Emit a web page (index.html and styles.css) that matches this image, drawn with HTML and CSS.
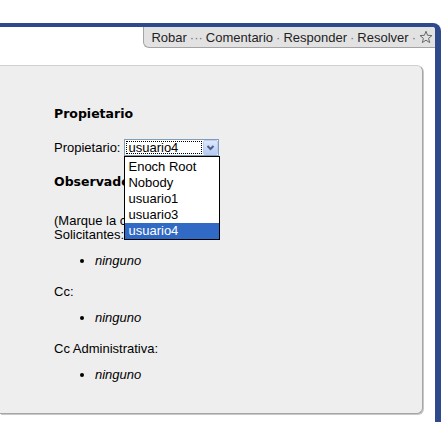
FILE: index.html
```html
<!DOCTYPE html>
<html lang="es">
<head>
    <title>Ticket - Propietario</title>
    <meta charset="utf-8">
    <link rel="stylesheet" href="styles.css">
</head>
<body>
    <div class="window">
        <div class="actions">
            <div class="tab">
                Robar <span class="sep">···</span> Comentario <span class="sep">·</span> Responder <span class="sep">·</span> Resolver <span class="sep">·</span>
                <svg class="star" width="14" height="14" viewBox="0 0 14 14">
                    <polygon points="7,1.2 8.59,5.32 12.99,5.55 9.57,8.33 10.7,12.6 7,10.2 3.3,12.6 4.43,8.33 1.01,5.55 5.41,5.32" fill="none" stroke="#6a6a6a" stroke-width="1" stroke-linejoin="round"/>
                </svg>
            </div>
        </div>
        <div class="box">
            <h3>Propietario</h3>
            <div class="row">
                <label for="owner">Propietario:</label>
                <div class="combo" id="owner">
                    <div class="combo-value">usuario4</div>
                    <div class="combo-btn">
                        <svg width="13" height="13" viewBox="0 0 13 13">
                            <polyline points="3.5,5 6.5,8 9.5,5" fill="none" stroke="#4d6185" stroke-width="2"/>
                        </svg>
                    </div>
                    <ul class="combo-list">
                        <li>Enoch Root</li>
                        <li>Nobody</li>
                        <li>usuario1</li>
                        <li>usuario3</li>
                        <li class="selected">usuario4</li>
                    </ul>
                </div>
            </div>
            <h3 class="next">Observadores</h3>
            <p class="hint">(Marque la casilla)<br>Solicitantes:</p>
            <ul class="people">
                <li>ninguno</li>
            </ul>
            <p>Cc:</p>
            <ul class="people">
                <li>ninguno</li>
            </ul>
            <p>Cc Administrativa:</p>
            <ul class="people">
                <li>ninguno</li>
            </ul>
        </div>
    </div>
</body>
</html>
```

FILE: styles.css
```css
html {
    font-family: "Liberation Sans", Arial, sans-serif;
    font-size: 13px;
    color: #000;
}
body {
    margin: 0;
    background: #fff;
}
.window {
    margin-top: 23px;
    height: 395px;
    overflow: hidden;
    border-top: 4px solid #2f4a8c;
    border-right: 6px solid #2f4a8c;
    border-top-right-radius: 8px;
}
.actions {
    display: flex;
    justify-content: flex-end;
}
.tab {
    display: flex;
    align-items: center;
    gap: 3px;
    height: 20px;
    padding: 0 2px 0 7px;
    background: #e2e2e2;
    border-left: 1px solid #a4a4a4;
    border-bottom: 1px solid #a4a4a4;
    border-bottom-left-radius: 6px;
    color: #222;
}
.sep {
    color: #777;
}
.star {
    display: block;
}
.box {
    margin: 17px 12px 0 0;
    padding: 40px 0 14px 54px;
    background: #eee;
    border: 1px solid #d0d0d0;
    border-left: none;
    border-right-color: #a6a6a6;
    border-bottom-color: #a6a6a6;
    border-radius: 0 6px 6px 0;
    box-shadow: 1px 1px 0 #c8c8c8;
}
h3 {
    margin: 0;
    font: bold 12.5px/15px "DejaVu Sans", Verdana, sans-serif;
}
h3.next {
    margin-top: 18px;
}
.row {
    display: flex;
    align-items: center;
    height: 17px;
    margin-top: 18px;
}
label {
    margin-right: 4px;
}
.combo {
    position: relative;
    display: flex;
    width: 93px;
    height: 15px;
    background: #fff;
    border: 1px solid #7f9db9;
}
.combo-value {
    flex: 1;
    margin: 1px;
    padding-left: 1px;
    border: 1px dotted #000;
    line-height: 11px;
}
.combo-btn {
    box-sizing: border-box;
    width: 15px;
    height: 15px;
    border: 1px solid #bccdf3;
    border-radius: 2px;
    background: linear-gradient(#dfe8fd, #b7cbf5);
}
.combo-btn svg {
    display: block;
}
.combo-list {
    position: absolute;
    top: 16px;
    left: -1px;
    z-index: 1;
    width: 94px;
    margin: 0;
    padding: 2px 0 0;
    list-style: none;
    background: #fff;
    border: 1px solid #000;
}
.combo-list li {
    height: 16px;
    padding-left: 3px;
    line-height: 16px;
}
.combo-list li.selected {
    background: #316ac5;
    color: #fff;
}
p {
    margin: 0;
    line-height: 14px;
}
.hint {
    margin: 25px 0 6px;
}
.people {
    margin: 12px 0 17px;
    padding-left: 41px;
    line-height: 14px;
    font-style: italic;
}
```
